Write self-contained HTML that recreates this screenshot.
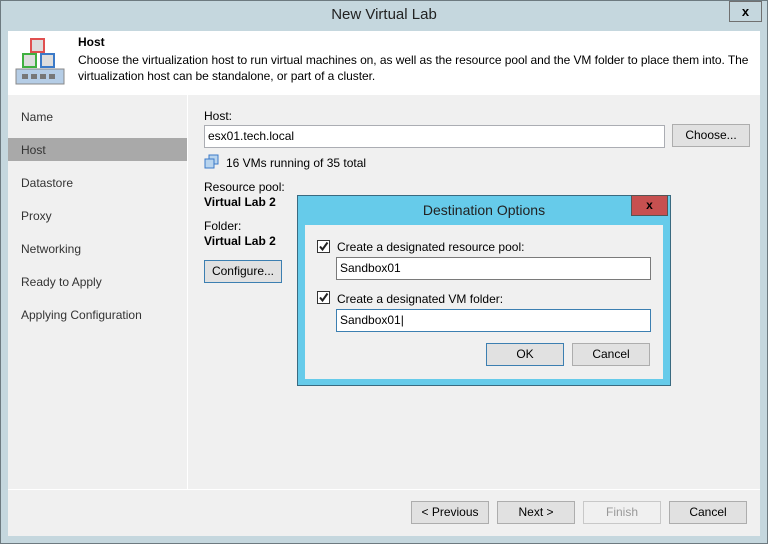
<!DOCTYPE html>
<html><head><style>
*{margin:0;padding:0;box-sizing:border-box}
body{width:768px;height:544px;position:relative;background:#c5d7de;font-family:"Liberation Sans",sans-serif;font-size:12px;color:#000;overflow:hidden}
.a{position:absolute}
.btn{position:absolute;background:#e1e1e1;border:1px solid #adadad;text-align:center;line-height:21px;font-size:12px}
.inp{position:absolute;background:#fff;border:1px solid #abadb3;padding-left:3px;line-height:20px}
.nav{position:absolute;left:21px;color:#333}
.cb{position:absolute;width:13px;height:13px;border:1px solid #333;background:#fff}
</style></head><body>
<div class="a" style="left:0;top:0;width:768px;height:544px;border:1px solid #6d7a80"></div>
<div class="a" style="left:0;top:6px;width:768px;text-align:center;font-size:15px;color:#222">New Virtual Lab</div>
<div class="a" style="left:729px;top:1px;width:33px;height:21px;border:1px solid #707070;text-align:center;font-weight:bold;font-size:13px;line-height:19px">x</div>
<div class="a" style="left:8px;top:31px;width:752px;height:64px;background:#fff"></div>
<svg class="a" style="left:14px;top:36px" width="54" height="54">
<rect x="17" y="3" width="13" height="13" fill="#ddd" stroke="#e05050" stroke-width="2"/>
<rect x="9" y="18" width="13" height="13" fill="#ddd" stroke="#40b040" stroke-width="2"/>
<rect x="27" y="18" width="13" height="13" fill="#ddd" stroke="#3b7ac8" stroke-width="2"/>
<rect x="2" y="33" width="48" height="15" fill="#b5cde6" stroke="#888"/>
<g fill="#777"><rect x="8" y="38" width="6" height="5"/><rect x="17" y="38" width="6" height="5"/><rect x="26" y="38" width="6" height="5"/><rect x="35" y="38" width="6" height="5"/></g>
</svg>
<div class="a" style="left:78px;top:35px;font-weight:bold">Host</div>
<div class="a" style="left:78px;top:52px;width:680px;line-height:16px;letter-spacing:-0.05px">Choose the virtualization host to run virtual machines on, as well as the resource pool and the VM folder to place them into. The virtualization host can be standalone, or part of a cluster.</div>
<div class="a" style="left:8px;top:95px;width:752px;height:441px;background:#f0f0f0"></div>
<div class="a" style="left:187px;top:95px;width:1px;height:395px;background:#fff"></div>
<div class="a" style="left:8px;top:489px;width:752px;height:1px;background:#fff"></div>
<div class="a" style="left:8px;top:138px;width:179px;height:23px;background:#a9a9a9"></div>
<div class="nav" style="top:110px">Name</div>
<div class="nav" style="top:143px">Host</div>
<div class="nav" style="top:176px">Datastore</div>
<div class="nav" style="top:209px">Proxy</div>
<div class="nav" style="top:242px">Networking</div>
<div class="nav" style="top:275px">Ready to Apply</div>
<div class="nav" style="top:308px">Applying Configuration</div>
<div class="a" style="left:204px;top:109px">Host:</div>
<div class="inp" style="left:204px;top:125px;width:461px;height:23px">esx01.tech.local</div>
<div class="btn" style="left:672px;top:124px;width:78px;height:23px">Choose...</div>
<svg class="a" style="left:204px;top:154px" width="16" height="16"><rect x="5" y="1" width="9" height="9" fill="#b8d4ee" stroke="#3b7ac8"/><rect x="1" y="5" width="9" height="9" fill="#b8d4ee" stroke="#3b7ac8"/></svg>
<div class="a" style="left:226px;top:156px">16 VMs running of 35 total</div>
<div class="a" style="left:204px;top:180px">Resource pool:</div>
<div class="a" style="left:204px;top:195px;font-weight:bold">Virtual Lab 2</div>
<div class="a" style="left:204px;top:219px">Folder:</div>
<div class="a" style="left:204px;top:234px;font-weight:bold">Virtual Lab 2</div>
<div class="btn" style="left:204px;top:260px;width:78px;height:23px;border-color:#3c7fb1">Configure...</div>
<div class="btn" style="left:411px;top:501px;width:78px;height:23px">&lt; Previous</div>
<div class="btn" style="left:497px;top:501px;width:78px;height:23px">Next &gt;</div>
<div class="btn" style="left:583px;top:501px;width:78px;height:23px;background:#f0f0f0;border-color:#c8c8c8;color:#999">Finish</div>
<div class="btn" style="left:669px;top:501px;width:78px;height:23px">Cancel</div>
<div class="a" style="left:297px;top:195px;width:374px;height:191px;background:#66cbea;border:1px solid #3a6a80"></div>
<div class="a" style="left:297px;top:202px;width:374px;text-align:center;font-size:14px;color:#222">Destination Options</div>
<div class="a" style="left:631px;top:195px;width:37px;height:21px;background:#c75050;border:1px solid #555;text-align:center;font-weight:bold;line-height:18px">x</div>
<div class="a" style="left:305px;top:225px;width:358px;height:154px;background:#f0f0f0"></div>
<div class="cb" style="left:317px;top:240px"><svg width="11" height="11" style="display:block"><path d="M2 5.5 L4.5 8.5 L9.5 1.5" fill="none" stroke="#222" stroke-width="2"/></svg></div>
<div class="a" style="left:337px;top:240px">Create a designated resource pool:</div>
<div class="inp" style="left:336px;top:257px;width:315px;height:23px;border-color:#7a7a7a">Sandbox01</div>
<div class="cb" style="left:317px;top:291px"><svg width="11" height="11" style="display:block"><path d="M2 5.5 L4.5 8.5 L9.5 1.5" fill="none" stroke="#222" stroke-width="2"/></svg></div>
<div class="a" style="left:337px;top:292px">Create a designated VM folder:</div>
<div class="inp" style="left:336px;top:309px;width:315px;height:23px;border-color:#3c7fb1">Sandbox01|</div>
<div class="btn" style="left:486px;top:343px;width:78px;height:23px;border-color:#3c7fb1">OK</div>
<div class="btn" style="left:572px;top:343px;width:78px;height:23px">Cancel</div>
</body></html>
